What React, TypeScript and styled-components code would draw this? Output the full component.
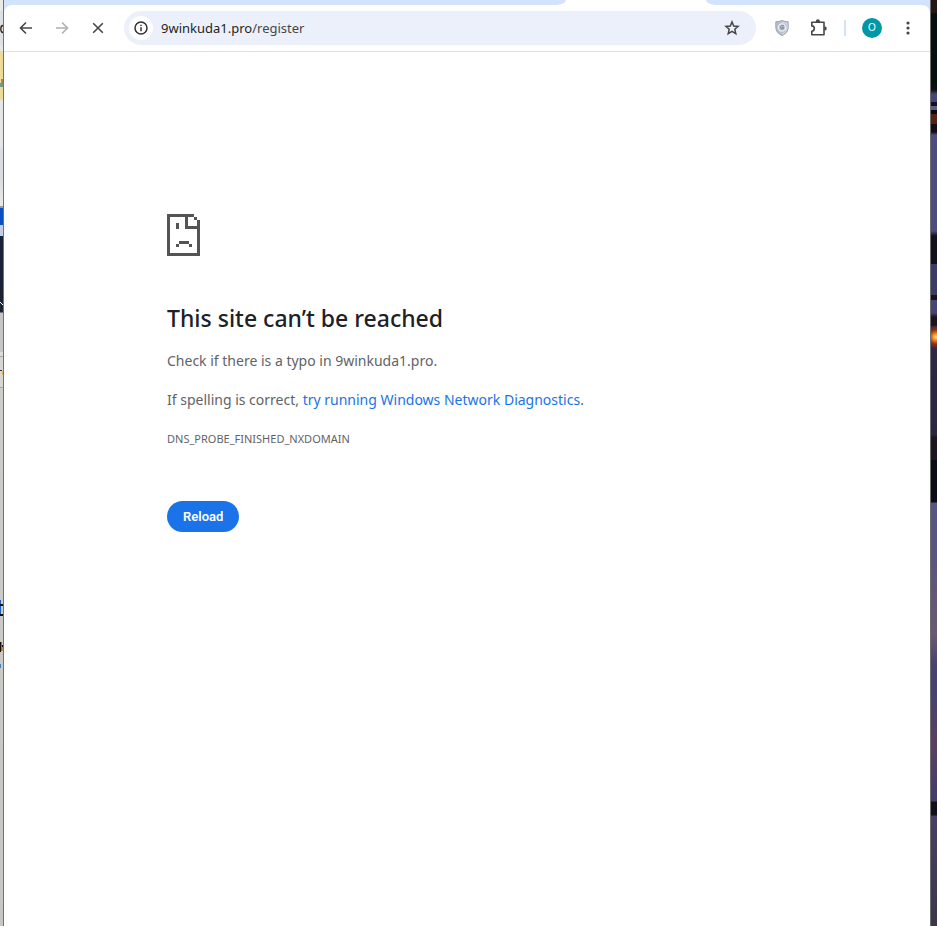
import React from "react";
import styled, { createGlobalStyle } from "styled-components";

const GlobalStyle = createGlobalStyle`
  *, *::before, *::after { box-sizing: border-box; }
  body { margin: 0; background: #cbc9c6; font-family: "Noto Sans", "Open Sans", sans-serif; }
`;

const Desktop = styled.div`
  display: flex;
  min-height: 100vh;
`;

const LeftSliver = styled.div`
  flex: 0 0 3px;
  overflow: hidden;
  background: linear-gradient(
    to bottom,
    #e9e9e9 0 11px, #dbe1e5 11px 45px, #e6e6e6 45px 51px,
    #eedb98 51px 100px, #e6e6e6 100px 145px, #d9dde0 150px 178px, #e8e8e6 200px 206px,
    #999999 206px 208px, #0b4fc4 208px 225px, #c3cfe8 225px 228px, #c3cfe8 228px 236px,
    #1a2236 236px 312px, #c8c6c4 313px 352px, #dedcda 352px 356px, #aaa8a5 356px 357px,
    #d8d6d3 357px 387px, #aaa8a5 387px 388px, #cfcdca 388px, #c8c6c3 926px
  );
`;

const RightSliver = styled.div`
  flex: 0 0 6px;
  background:
    radial-gradient(circle at 5px 337px, #ffe08a 0, #ff8a22 3px, #8c3514 7px, transparent 12px),
    linear-gradient(
      to bottom,
      #211818 0 13px, #071010 13px 85px, #111116 90px, #45467a 94px 102px,
      #15101a 102px 106px, #5d5d90 106px 110px, #0c080c 110px 114px, #58200f 114px 124px,
      #140c14 124px 132px, #4b4c82 135px 231px, #131218 236px 264px, #3c3a66 264px 295px,
      #201010 295px 300px, #454577 300px 313px, #201418 317px 326px, #33253a 326px 350px,
      #2d2846 350px, #2a2540 435px, #1d1620 437px 460px, #0c0c14 460px 502px,
      #565586 503px, #5a5580 560px, #6b5870 635px, #484270 665px, #484270 700px,
      #5c3f60 745px, #443d6c 795px, #443d6c 801px, #101016 802px 815px, #473f66 816px, #3d3648 926px
    );
`;

const Window = styled.div`
  flex: 1;
  min-width: 0;
  display: flex;
  flex-direction: column;
  border-left: 1px solid #76716d;
  border-right: 1px solid #6e6e70;
  background: #d3e3fd;
`;

const TabStrip = styled.div`
  display: flex;
  height: 5px;
  background: #ffffff;
`;

const InactiveTabs = styled.div<{ $side: "left" | "right" }>`
  flex: ${(p) => (p.$side === "left" ? 562 : 224)} 1 0;
  background: #d3e3fd;
  border-radius: ${(p) => (p.$side === "left" ? "0 0 10px 0 / 0 0 5px 0" : "0 0 0 10px / 0 0 0 5px")};
`;

const ActiveTab = styled.div`
  flex: 0 0 140px;
`;

const Toolbar = styled.header`
  display: flex;
  align-items: center;
  gap: 8px;
  height: 47px;
  padding: 0 8px;
  background: #ffffff;
  border-bottom: 1px solid #dfe1e3;
  border-radius: 8px 8px 0 0;
`;

const IconButton = styled.button`
  flex: 0 0 28px;
  height: 28px;
  display: flex;
  align-items: center;
  justify-content: center;
  padding: 0;
  border: 0;
  border-radius: 50%;
  background: transparent;
  color: #474747;
  &:disabled { color: #b0b0b0; }
  svg { display: block; }
`;

const AddressBar = styled.div`
  flex: 1;
  min-width: 0;
  display: flex;
  align-items: center;
  gap: 8px;
  height: 34px;
  margin: 0 4px;
  padding: 0 10px 0 5px;
  border-radius: 17px;
  background: #ebf0fa;
`;

const SiteInfo = styled(IconButton)`
  flex-basis: 24px;
  height: 24px;
  background: #ffffff;
  color: #303134;
`;

const Url = styled.div`
  flex: 1;
  min-width: 0;
  font-size: 13px;
  line-height: 20px;
  color: #1f1f1f;
  white-space: nowrap;
  span { color: #474747; }
`;

const Divider = styled.div`
  width: 2px;
  height: 16px;
  margin: 0 4px;
  background: #d3e3fd;
`;

const Avatar = styled.span`
  width: 20px;
  height: 20px;
  border-radius: 50%;
  background: #0097a7;
  color: #ffffff;
  font-size: 10px;
  line-height: 20px;
  text-align: center;
`;

const Page = styled.main`
  flex: 1;
  padding: 162px 163px 80px;
  background: #ffffff;
  color: #5f6368;
  font-size: 14px;
  line-height: 24px;
`;

const SadFile = styled.svg`
  display: block;
  width: 33px;
  height: 42px;
  fill: #545454;
`;

const Title = styled.h1`
  margin: 48px 0 16px;
  color: #202124;
  font-size: 23px;
  font-weight: 500;
  line-height: 29px;
`;

const Paragraph = styled.p`
  margin: 0 0 15px;
`;

const DiagnosticsLink = styled.a`
  color: #1a73e8;
  text-decoration: none;
`;

const ErrorCode = styled.div`
  font-size: 11px;
`;

const ReloadButton = styled.button`
  margin-top: 50px;
  height: 31px;
  padding: 0 16px;
  border: 0;
  border-radius: 16px;
  background: #1a73e8;
  color: #ffffff;
  font-family: Roboto, "Liberation Sans", sans-serif;
  font-size: 13px;
  font-weight: 600;
`;

const Stroke = ({ children }: { children: React.ReactNode }) => (
  <svg width="16" height="16" viewBox="0 0 16 16" fill="none" stroke="currentColor" strokeWidth="1.6">
    {children}
  </svg>
);

export default function App() {
  return (
    <>
      <GlobalStyle />
      <Desktop>
        <LeftSliver>
          <svg width="3" height="700" viewBox="0 0 3 700" display="block">
            <path d="M3 25.5Q0.8 25.5 0.8 29Q0.8 32.5 3 32.5" fill="none" stroke="#382419" strokeWidth="1.3" />
            <path d="M0 83h1v4h-1z" fill="#5aa69a" />
            <path d="M1 79h2v8h-2z" fill="#9a8a68" />
            <path d="M0 302l3 3" stroke="#ffffff" />
            <path d="M0 370h2v1h-2z" fill="#333333" />
            <path d="M2 371h1v4h-1z" fill="#e5ad4c" />
            <path d="M0 600h1v16h-1z" fill="#1660bd" />
            <path d="M0 604h3v2h-3zM0 614h3v2h-3z" fill="#111111" />
            <path d="M0 642h1v10h-1zM1 645h2v2h-2z" fill="#16120f" />
            <path d="M1 642h1v9h-1z" fill="#3f7fbc" />
            <path d="M2 647h1v4h-1z" fill="#c39445" />
            <path d="M0 664h1v4h-1z" fill="#3b82c4" />
          </svg>
        </LeftSliver>
        <Window>
          <TabStrip>
            <InactiveTabs $side="left" />
            <ActiveTab />
            <InactiveTabs $side="right" />
          </TabStrip>
          <Toolbar>
            <IconButton aria-label="Back">
              <Stroke><path d="M14 8H3M8 2.5L2.5 8L8 13.5" /></Stroke>
            </IconButton>
            <IconButton aria-label="Forward" disabled>
              <Stroke><path d="M2 8H13M8 2.5L13.5 8L8 13.5" /></Stroke>
            </IconButton>
            <IconButton aria-label="Stop loading">
              <Stroke><path d="M3.2 3.2L12.8 12.8M12.8 3.2L3.2 12.8" /></Stroke>
            </IconButton>
            <AddressBar>
              <SiteInfo aria-label="View site information">
                <Stroke>
                  <circle cx="8" cy="8" r="6" strokeWidth="1.5" />
                  <path d="M8 7.2V11.2M8 4.7V6.1" strokeWidth="1.5" />
                </Stroke>
              </SiteInfo>
              <Url>9winkuda1.pro<span>/register</span></Url>
              <IconButton aria-label="Bookmark this tab">
                <Stroke>
                  <path d="M8 1.9L9.7 6L14.1 6.4L10.8 9.3L11.8 13.7L8 11.4L4.2 13.7L5.2 9.3L1.9 6.4L6.3 6Z" strokeWidth="1.5" />
                </Stroke>
              </IconButton>
            </AddressBar>
            <IconButton aria-label="Shield extension">
              <svg width="14" height="16" viewBox="0 0 14 16" fill="none">
                <path d="M7 0.5Q10 1.8 13.2 1.8V7Q13.2 13 7 15.6Q0.8 13 0.8 7V1.8Q4 1.8 7 0.5Z" fill="#b8bfcb" stroke="#9ba5b5" />
                <path d="M7 2Q9.5 3 12 3V7Q12 12 7 14.2" stroke="#dce0e6" />
                <circle cx="7" cy="7.5" r="3.6" stroke="#eceff3" strokeWidth="1.3" />
                <path d="M9 5.5Q6.5 4.5 5.5 7Q5.5 9.5 8 9L8.7 7.5H7" stroke="#7f8b9f" />
              </svg>
            </IconButton>
            <IconButton aria-label="Extensions">
              <svg width="18" height="18" viewBox="0 0 18 18" fill="none" stroke="currentColor" strokeWidth="1.6">
                <path d="M2.8 3.2H15V15.8H2.8V12.3Q5.3 12.1 5.3 9.6Q5.3 7.1 2.8 6.9Z" strokeLinejoin="round" />
                <path d="M6.9 3V2A2 1.7 0 0 1 10.9 2V3ZM15.4 7.4H16.2A1.5 2 0 0 1 16.2 11.4H15.4Z" fill="currentColor" stroke="none" />
              </svg>
            </IconButton>
            <Divider />
            <IconButton aria-label="Profile"><Avatar>O</Avatar></IconButton>
            <IconButton aria-label="Menu">
              <svg width="4" height="16" viewBox="0 0 4 16" fill="currentColor">
                <circle cx="2" cy="3" r="1.6" /><circle cx="2" cy="8" r="1.6" /><circle cx="2" cy="13" r="1.6" />
              </svg>
            </IconButton>
          </Toolbar>
          <Page>
            <SadFile viewBox="0 0 33 42" shapeRendering="crispEdges" aria-hidden="true">
              <path d="M0 0H27V3H21V12H33V15H18V3H3V39H30V15H33V42H0ZM27 3H30V6H27ZM30 6H33V13H30ZM9 9H12V15H9ZM12 27H22V30H12ZM9 30H12V33H9ZM22 30H25V33H22Z" />
            </SadFile>
            <Title>This site can’t be reached</Title>
            <Paragraph>Check if there is a typo in 9winkuda1.pro.</Paragraph>
            <Paragraph>
              If spelling is correct, <DiagnosticsLink href="#diagnostics">try running Windows Network Diagnostics</DiagnosticsLink>.
            </Paragraph>
            <ErrorCode>DNS_PROBE_FINISHED_NXDOMAIN</ErrorCode>
            <ReloadButton>Reload</ReloadButton>
          </Page>
        </Window>
        <RightSliver />
      </Desktop>
    </>
  );
}
